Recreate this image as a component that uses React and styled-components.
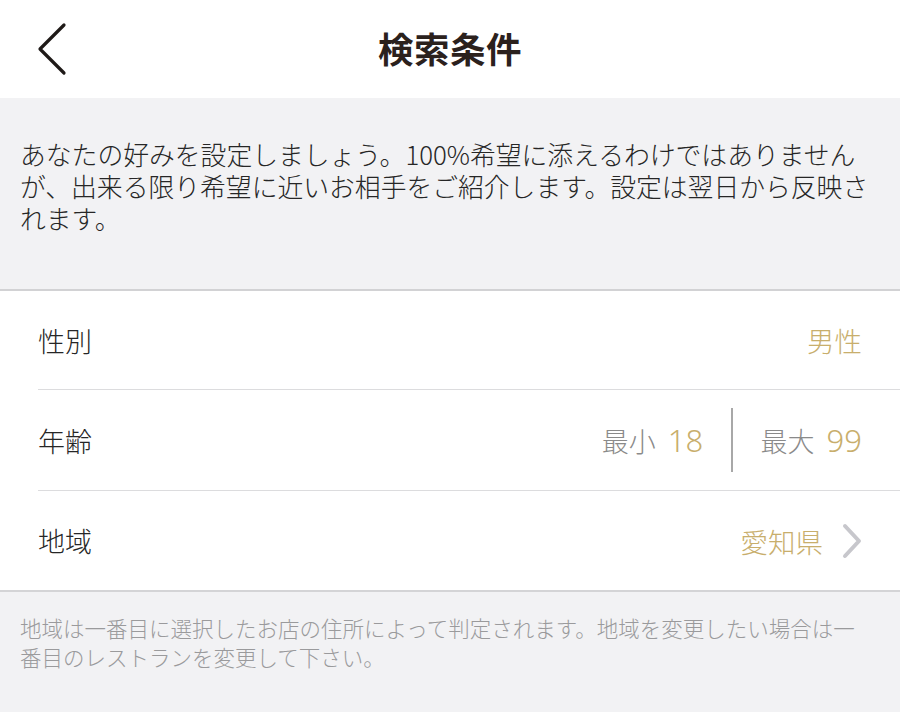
import React from "react";
import styled, { createGlobalStyle } from "styled-components";

const Global = createGlobalStyle`
  html, body { margin: 0; padding: 0; background: #f2f2f4; }
  body { font-family: "Noto Sans CJK JP", "Noto Sans", sans-serif; }
  * { box-sizing: border-box; }
`;

const Page = styled.div`
  width: 900px;
  min-height: 712px;
  background: #f2f2f4;
  display: flex;
  flex-direction: column;
`;

const Header = styled.header`
  height: 98px;
  background: #ffffff;
  display: grid;
  grid-template-columns: 120px 1fr 120px;
  align-items: center;
`;

const BackButton = styled.button`
  border: 0;
  background: transparent;
  padding: 0 0 0 36px;
  height: 98px;
  display: flex;
  align-items: center;
  cursor: pointer;
`;

const Title = styled.h1`
  margin: 0;
  text-align: center;
  font-size: 35.5px;
  font-weight: 700;
  color: #2b211d;
  letter-spacing: 0.5px;
  line-height: 1;
  padding-bottom: 2px;
`;

const Intro = styled.p`
  margin: 0;
  padding: 40px 20px 55px 20px;
  font-size: 25.8px;
  line-height: 32px;
  color: #262626;
  font-weight: 300;
  white-space: nowrap;
  border-bottom: 2px solid #d2d2d4;
`;

const List = styled.div`
  background: #ffffff;
  border-bottom: 2px solid #d4d4d6;
`;

const Row = styled.div`
  height: ${(p) => p.$h || 100}px;
  margin-left: 38px;
  padding-right: 38px;
  display: flex;
  align-items: center;
  justify-content: space-between;
  border-bottom: ${(p) => (p.$last ? "none" : "1.5px solid #dcdcde")};
`;

const Label = styled.span`
  font-size: 27px;
  color: #262626;
  font-weight: 300;
`;

const Value = styled.span`
  font-size: 27.5px;
  color: #c8ae6c;
  font-weight: 300;
`;

const Range = styled.div`
  display: flex;
  align-items: center;
`;

const RangeItem = styled.span`
  display: flex;
  align-items: baseline;
  gap: 12px;
`;

const RangeLabel = styled.span`
  font-size: 27px;
  font-weight: 300;
  color: #8a8a8a;
`;

const RangeNum = styled.span`
  font-family: "Noto Sans", "Open Sans", sans-serif;
  font-weight: 300;
  font-size: 31px;
  color: #c8ae6c;
`;

const Divider = styled.span`
  width: 1.5px;
  height: 64px;
  background: #a8a8a8;
  margin: 0 28px 0 28px;
`;

const Trail = styled.div`
  display: flex;
  align-items: center;
  gap: 18px;
  margin-right: -1px;
`;

const Note = styled.p`
  margin: 0;
  padding: 21px 20px 0 20px;
  font-size: 21.5px;
  line-height: 29px;
  font-weight: 300;
  color: #9a9a9c;
  white-space: nowrap;
`;

const BackIcon = () => (
  <svg width="32" height="54" viewBox="0 0 32 54" fill="none">
    <path d="M28 3 L4 27 L28 51" stroke="#1f1a18" strokeWidth="3.2" strokeLinecap="round" strokeLinejoin="round" />
  </svg>
);

const ChevronRight = () => (
  <svg width="22" height="36" viewBox="0 0 22 36" fill="none">
    <path d="M4 3 L18 18 L4 33" stroke="#c7c7cc" strokeWidth="4" strokeLinecap="round" strokeLinejoin="round" />
  </svg>
);

export default function App() {
  return (
    <>
      <Global />
      <Page>
        <Header>
          <BackButton aria-label="戻る">
            <BackIcon />
          </BackButton>
          <Title>検索条件</Title>
          <span />
        </Header>
        <Intro>
          あなたの好みを設定しましょう。100%希望に添えるわけではありません
          <br />
          が、出来る限り希望に近いお相手をご紹介します。設定は翌日から反映さ
          <br />
          れます。
        </Intro>
        <List>
          <Row $h={99}>
            <Label>性別</Label>
            <Value>男性</Value>
          </Row>
          <Row $h={101}>
            <Label>年齢</Label>
            <Range>
              <RangeItem>
                <RangeLabel>最小</RangeLabel>
                <RangeNum>18</RangeNum>
              </RangeItem>
              <Divider />
              <RangeItem>
                <RangeLabel>最大</RangeLabel>
                <RangeNum>99</RangeNum>
              </RangeItem>
            </Range>
          </Row>
          <Row $h={99} $last>
            <Label>地域</Label>
            <Trail>
              <Value>愛知県</Value>
              <ChevronRight />
            </Trail>
          </Row>
        </List>
        <Note>
          地域は一番目に選択したお店の住所によって判定されます。地域を変更したい場合は一
          <br />
          番目のレストランを変更して下さい。
        </Note>
      </Page>
    </>
  );
}
